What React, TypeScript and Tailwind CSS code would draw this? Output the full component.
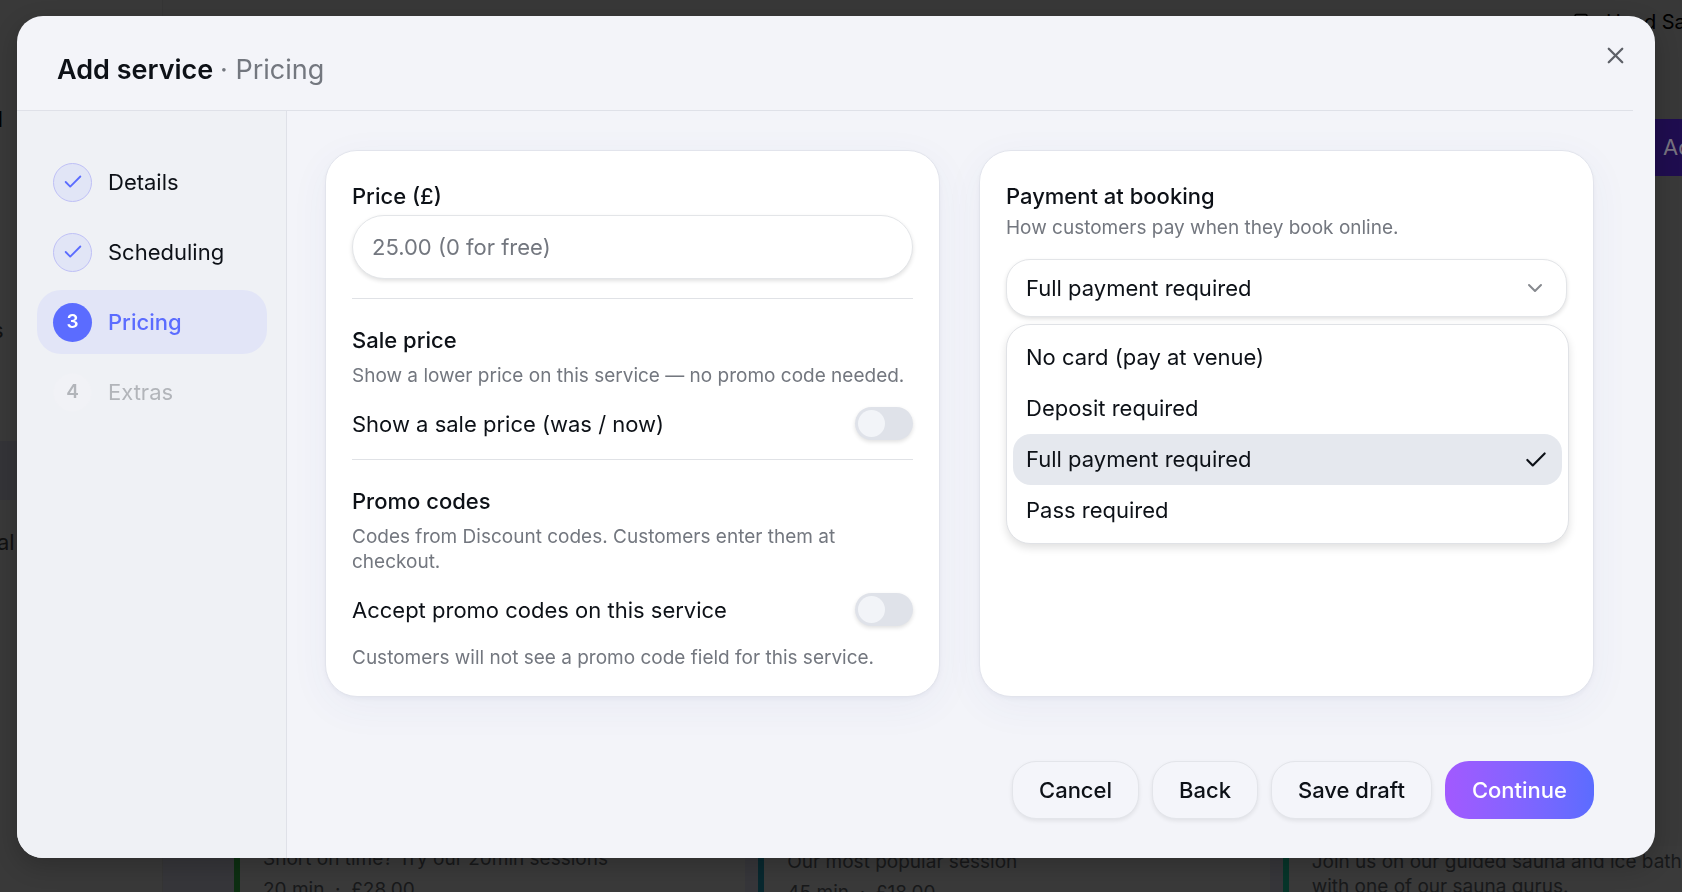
import { useState } from 'react'
import type { ReactNode } from 'react'
import { Building, Check, ChevronDown, X } from 'lucide-react'
import clsx from 'clsx'

const STEPS = ['Details', 'Scheduling', 'Pricing', 'Extras']
const CURRENT_STEP = 2

const PAYMENT_OPTIONS = [
  'No card (pay at venue)',
  'Deposit required',
  'Full payment required',
  'Pass required',
]

interface StepItemProps {
  index: number
  label: string
}

const StepItem = ({ index, label }: StepItemProps) => {
  const done = index < CURRENT_STEP
  const active = index === CURRENT_STEP
  return (
    <li>
      <button
        type="button"
        disabled={index > CURRENT_STEP}
        className={clsx(
          'flex h-16 w-full items-center gap-4 rounded-3xl px-4 text-left text-[22px] leading-8',
          active ? 'bg-[#e2e5f7] font-medium text-[#5b6cff]' : 'text-[#0d1117] disabled:text-[#b2b5ba]',
        )}
      >
        <span
          className={clsx(
            'flex size-[39px] shrink-0 items-center justify-center rounded-full text-[19px] font-semibold',
            done && 'border border-[#bfc0f6] bg-[#e1e5f6] text-[#5b6cff]',
            active && 'bg-[#5b6cff] text-white',
            !done && !active && 'border border-[#f1f2f6] bg-[#f1f2f6] text-[#b2b5ba]',
          )}
        >
          {done ? <Check className="size-[22px]" strokeWidth={2} /> : index + 1}
        </span>
        {label}
      </button>
    </li>
  )
}

const Card = ({ children }: { children: ReactNode }) => (
  <section className="rounded-[32px] border border-[#e2e4ec] bg-white p-[26px] shadow-[0_2px_4px_rgba(30,35,80,0.04),0_10px_40px_rgba(60,70,150,0.05)]">
    {children}
  </section>
)

const Hint = ({ children, className }: { children: ReactNode; className?: string }) => (
  <p className={clsx('text-[19px] leading-[25px] text-[#73777f]', className)}>{children}</p>
)

interface ToggleRowProps {
  id: string
  label: string
}

const ToggleRow = ({ id, label }: ToggleRowProps) => {
  const [on, setOn] = useState(false)
  return (
    <div className="mt-[19px] flex h-[33px] items-center justify-between">
      <label htmlFor={id} className="text-[22px] leading-8">{label}</label>
      <input
        id={id}
        type="checkbox"
        role="switch"
        checked={on}
        onChange={(e) => setOn(e.target.checked)}
        className="flex h-[33px] w-[58px] appearance-none items-center rounded-full bg-[#dfe2e9] px-[3px] shadow-[0_2px_4px_rgba(0,0,0,0.12)] before:size-[27px] before:rounded-full before:bg-[#f2f4f8] checked:justify-end checked:bg-[#5b6cff]"
      />
    </div>
  )
}

interface ServiceCardProps {
  barClass: string
  lines: string[]
  meta: string
  className?: string
}

const ServiceCard = ({ barClass, lines, meta, className }: ServiceCardProps) => (
  <article className="flex min-w-0 flex-1 bg-[#3a3a3a]">
    <div className={clsx('w-[6px] shrink-0', barClass)} />
    <div className={clsx('overflow-hidden pl-[23px] whitespace-pre text-[19px] leading-[25px] text-[#18191a]', className)}>
      {lines.map((line) => <p key={line}>{line}</p>)}
      {meta && <p className="mt-[6px]">{meta}</p>}
    </div>
  </article>
)

// Dimmed services page behind the dialog
const Backdrop = () => (
  <div aria-hidden="true" className="flex h-screen overflow-hidden bg-[#393939] text-black">
    <div className="w-[163px] shrink-0 border-r border-[#353535] pt-[103px] text-[22px] leading-8">
      <p className="-ml-[3px] font-semibold">l</p>
      <p className="mt-[179px] -ml-2 text-[#111111]">s</p>
      <div className="mt-[95px] h-[59px] bg-[#343438]" />
      <p className="mt-[26px] -ml-[3px] text-[#111111]">al</p>
    </div>
    <div className="flex min-w-0 flex-1 flex-col">
      <div className="flex h-[119px] items-start justify-end bg-[#383838] pt-2 text-xl leading-7">
        <div className="flex w-[110px] shrink-0 items-center gap-4 whitespace-nowrap">
          <Building className="size-[18px] shrink-0" />
          Hand Sauna
        </div>
      </div>
      <div className="flex justify-end">
        <div className="h-[57px] w-20 overflow-hidden bg-[#1f0d4f] pl-[61px] text-[22px] leading-[57px] text-[#77727f]">Add</div>
      </div>
      <div className="mt-auto -mr-28 flex h-[46px] gap-[13px] bg-[#36363a] pl-[71px]">
        <ServiceCard barClass="bg-[#0d2f12]" lines={['Short on time? Try our 20min sessions']} meta="20 min  ·  £28.00" />
        <ServiceCard barClass="bg-[#08282f]" className="pt-[3px]" lines={['Our most popular session']} meta="45 min  ·  £18.00" />
        <ServiceCard
          barClass="bg-[#07352a]"
          className="pt-[3px]"
          lines={['Join us on our guided sauna and ice bath', 'with one of our sauna gurus.']}
          meta=""
        />
      </div>
    </div>
  </div>
)

const OUTLINE_BUTTON =
  'h-[58px] rounded-3xl border border-[#e3e5ea] bg-[#f4f5fa] px-[26px] text-[22px] font-medium shadow-[0_2px_4px_rgba(0,0,0,0.08)]'

export default function App() {
  const [payment, setPayment] = useState('Full payment required')

  return (
    <div className="font-['Inter',sans-serif]">
      <Backdrop />
      <div className="fixed inset-0 flex pt-4 pr-[27px] pb-[34px] pl-[17px] text-[#0d1117]">
        <div
          role="dialog"
          aria-labelledby="dialog-title"
          className="relative flex flex-1 flex-col overflow-hidden rounded-[26px] bg-[#f3f4f9] shadow-[0_8px_24px_rgba(0,0,0,0.2)]"
        >
          <header className="mr-[22px] flex h-[95px] items-center border-b border-[#dfe1e8] pt-[14px] pl-10">
            <h1 id="dialog-title" className="text-[27px] leading-10 font-semibold">
              Add service <span className="font-normal text-[#73777f]">· Pricing</span>
            </h1>
          </header>
          <button type="button" aria-label="Close" className="absolute top-[23px] right-6 flex size-8 items-center justify-center text-[#5d6067]">
            <X className="size-[27px]" strokeWidth={2} />
          </button>

          <div className="flex flex-1">
            <nav aria-label="Steps" className="w-[270px] shrink-0 border-r border-[#dfe1e8] bg-[#eff1f5] pt-[39px] pr-[19px] pl-5">
              <ol className="flex flex-col gap-[6px]">
                {STEPS.map((label, index) => <StepItem key={label} index={index} label={label} />)}
              </ol>
            </nav>

            <form className="flex flex-1 flex-col pt-[39px] pr-[61px] pb-[39px] pl-[38px]">
              <div className="grid grid-cols-2 gap-[39px]">
                <Card>
                  <label htmlFor="price" className="block text-[22px] leading-[38px] font-medium">Price (£)</label>
                  <input
                    id="price"
                    type="text"
                    placeholder="25.00 (0 for free)"
                    className="mb-[19px] block h-16 w-full rounded-full border border-[#e3e5e8] bg-white px-[19px] text-[22px] shadow-[0_2px_4px_rgba(0,0,0,0.12)] placeholder:text-[#73777f]"
                  />
                  <div className="border-t border-[#e0e2e6] pt-[25px] pb-[19px]">
                    <h2 className="text-[22px] leading-8 font-medium">Sale price</h2>
                    <Hint className="mt-[7px]">Show a lower price on this service — no promo code needed.</Hint>
                    <ToggleRow id="sale-price" label="Show a sale price (was / now)" />
                  </div>
                  <div className="border-t border-[#e0e2e6] pt-[25px]">
                    <h2 className="text-[22px] leading-8 font-medium">Promo codes</h2>
                    <Hint className="mt-[7px]">Codes from Discount codes. Customers enter them at checkout.</Hint>
                    <ToggleRow id="promo-codes" label="Accept promo codes on this service" />
                    <Hint className="mt-[19px]">Customers will not see a promo code field for this service.</Hint>
                  </div>
                </Card>

                <Card>
                  <label htmlFor="payment" className="block text-[22px] leading-[38px] font-medium">Payment at booking</label>
                  <Hint>How customers pay when they book online.</Hint>
                  <div className="relative mt-[19px]">
                    <select
                      id="payment"
                      value={payment}
                      onChange={(e) => setPayment(e.target.value)}
                      className="block h-[58px] w-full appearance-none rounded-3xl border border-[#e3e5e8] bg-white px-[19px] text-[22px] shadow-[0_2px_4px_rgba(0,0,0,0.12)]"
                    >
                      {PAYMENT_OPTIONS.map((option) => <option key={option}>{option}</option>)}
                    </select>
                    <ChevronDown className="pointer-events-none absolute top-[17px] right-5 size-6 text-[#86898e]" strokeWidth={2} />
                    <ul
                      role="listbox"
                      aria-label="Payment at booking"
                      className="absolute top-full -right-[2px] left-0 mt-[7px] rounded-3xl border border-[#e0e2e6] bg-white px-[6px] py-[7px] shadow-[0_4px_8px_rgba(0,0,0,0.12)]"
                    >
                      {PAYMENT_OPTIONS.map((option) => (
                        <li
                          key={option}
                          role="option"
                          aria-selected={option === payment}
                          onClick={() => setPayment(option)}
                          className="flex h-[51px] items-center justify-between rounded-[18px] px-[13px] text-[22px] aria-selected:bg-[#e5e8ee]"
                        >
                          {option}
                          {option === payment && <Check className="size-[26px]" strokeWidth={2} />}
                        </li>
                      ))}
                    </ul>
                  </div>
                </Card>
              </div>

              <div className="mt-auto flex justify-end gap-[13px]">
                <button type="button" className={OUTLINE_BUTTON}>Cancel</button>
                <button type="button" className={OUTLINE_BUTTON}>Back</button>
                <button type="button" className={OUTLINE_BUTTON}>Save draft</button>
                <button
                  type="button"
                  className="h-[58px] rounded-3xl bg-linear-to-r from-[#a259ff] to-[#5b6cff] px-[27px] text-[22px] font-medium text-white"
                >
                  Continue
                </button>
              </div>
            </form>
          </div>
        </div>
      </div>
    </div>
  )
}
